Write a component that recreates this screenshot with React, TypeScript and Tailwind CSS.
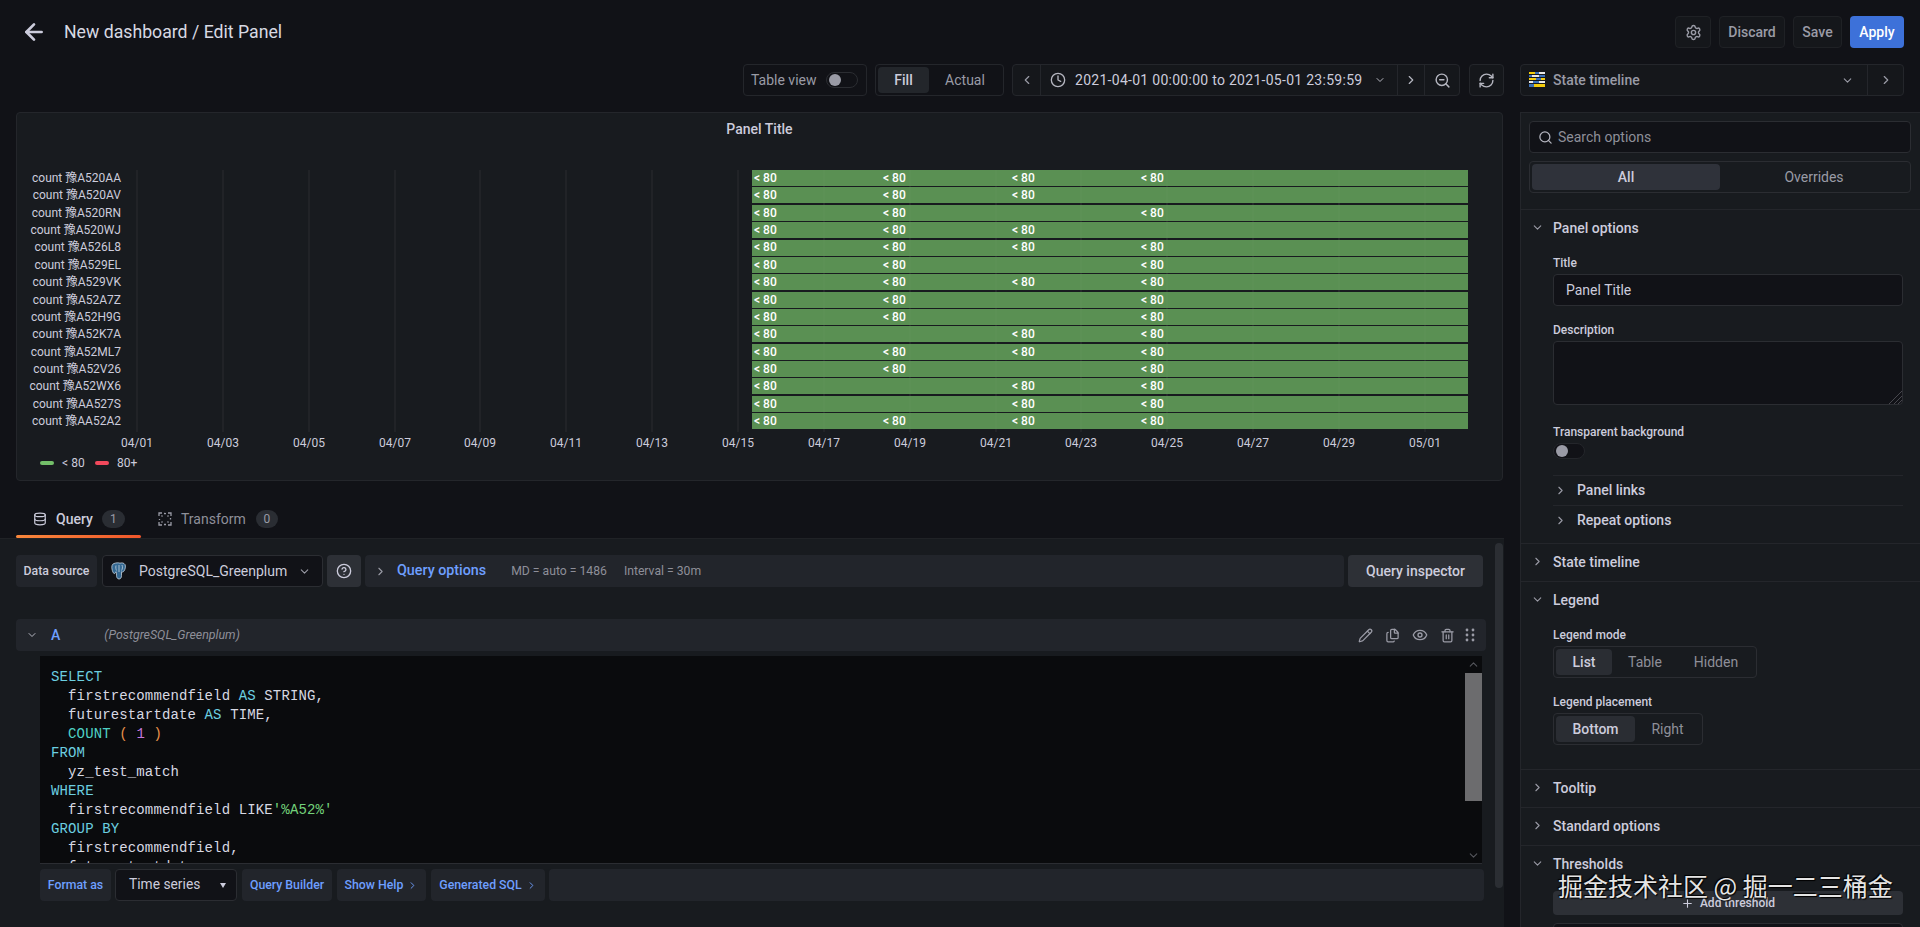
import React from "react";
import { ArrowLeft, Settings, ChevronDown, ChevronLeft, ChevronRight, ChevronUp, Clock, ZoomOut, RefreshCw, Search, Database, Pencil, Files, Eye, Trash2, CircleHelp, Plus } from "lucide-react";

const rows: [string, number[]][] = [
  ["count 豫A520AA", [0, 1, 2, 3]],
  ["count 豫A520AV", [0, 1, 2]],
  ["count 豫A520RN", [0, 1, 3]],
  ["count 豫A520WJ", [0, 1, 2]],
  ["count 豫A526L8", [0, 1, 2, 3]],
  ["count 豫A529EL", [0, 1, 3]],
  ["count 豫A529VK", [0, 1, 2, 3]],
  ["count 豫A52A7Z", [0, 1, 3]],
  ["count 豫A52H9G", [0, 1, 3]],
  ["count 豫A52K7A", [0, 2, 3]],
  ["count 豫A52ML7", [0, 1, 2, 3]],
  ["count 豫A52V26", [0, 1, 3]],
  ["count 豫A52WX6", [0, 2, 3]],
  ["count 豫AA527S", [0, 2, 3]],
  ["count 豫AA52A2", [0, 1, 2, 3]],
];
const rowTops = [170, 187, 205, 222, 240, 257, 274, 292, 309, 326, 344, 361, 378, 396, 413];
const colX = [754, 883, 1012, 1141];
const ticks: [string, number][] = [
  ["04/01", 137], ["04/03", 223], ["04/05", 309], ["04/07", 395], ["04/09", 480], ["04/11", 566], ["04/13", 652], ["04/15", 738],
  ["04/17", 824], ["04/19", 910], ["04/21", 996], ["04/23", 1081], ["04/25", 1167], ["04/27", 1253], ["04/29", 1339], ["05/01", 1425],
];

function Chart() {
  return (
    <svg width={1486} height={307} viewBox="17 145 1486 307" className="block" style={{ fontFamily: "Roboto, 'Noto Sans CJK SC', sans-serif" }}>
      {ticks.map(([t, x]) => (
        <line key={t} x1={x} x2={x} y1={170} y2={432} stroke="#2b2d31" strokeWidth={1} />
      ))}
      {rows.map(([name, cols], i) => {
        const ty = rowTops[i] + (i === 4 ? 11 : 12);
        return (
          <g key={name}>
            <text x={121} y={ty} textAnchor="end" fontSize={12} fill="#ccccdc">{name}</text>
            <rect x={752} y={rowTops[i]} width={716} height={16} fill="#5a9053" />
            {cols.map((c) => (
              <text key={c} x={colX[c]} y={ty} fontSize={12} fontWeight={500} fill="#ffffff">&lt; 80</text>
            ))}
          </g>
        );
      })}
      {ticks.slice(8).map(([t, x]) => (
        <line key={t} x1={x} x2={x} y1={170} y2={429} stroke="#ffffff" strokeOpacity={0.03} strokeWidth={1} />
      ))}
      {ticks.map(([t, x]) => (
        <text key={t} x={x} y={447} textAnchor="middle" fontSize={12} fill="#ccccdc">{t}</text>
      ))}
    </svg>
  );
}

function TimelineIcon() {
  return (
    <svg width="16" height="16" viewBox="0 0 16 16" className="shrink-0">
      <rect x="0" y="0" width="6" height="2" fill="#f2cc0c" /><rect x="6" y="0" width="4" height="2" fill="#3b6fb6" /><rect x="10" y="0" width="6" height="2" fill="#e8e8e8" />
      <rect x="0" y="3" width="3" height="2" fill="#3b6fb6" /><rect x="3" y="3" width="7" height="2" fill="#e8e8e8" /><rect x="10" y="3" width="6" height="2" fill="#3b6fb6" />
      <rect x="0" y="6" width="7" height="2" fill="#f2cc0c" /><rect x="7" y="6" width="5" height="2" fill="#3b6fb6" /><rect x="12" y="6" width="4" height="2" fill="#f2cc0c" />
      <rect x="0" y="9" width="4" height="2" fill="#e8e8e8" /><rect x="4" y="9" width="6" height="2" fill="#3b6fb6" /><rect x="10" y="9" width="6" height="2" fill="#e8e8e8" />
      <rect x="0" y="12" width="5" height="3" fill="#3b6fb6" /><rect x="5" y="12" width="5" height="3" fill="#f2cc0c" /><rect x="10" y="12" width="6" height="3" fill="#f2cc0c" />
    </svg>
  );
}

function PgIcon() {
  return (
    <svg width="16" height="18" viewBox="0 0 16 18" className="shrink-0">
      <path d="M3 1.5C1 2 .5 4.500 1 7c.4 2 1 4 2 4.500 1 .4 1.500-.8 2-1.800.5 1 .5 2 .5 3.500 0 2 .8 3.800 2.500 3.800 1.800 0 2.500-1.500 2.500-3.500V9.800c1 .5 1.800.2 2.500-.8 1.200-1.800 2-4.500 1-6.500C13 .8 10.500.6 9 1.200 7.500.6 4.800.8 3 1.500z" fill="#336791" stroke="#c6d3de" strokeWidth="0.8" />
      <path d="M8 3v7M5 3.500c-.5 2 0 4 .5 5M11 3c.8 2 .5 4-.5 5.500" stroke="#d8e2ea" strokeWidth="0.7" fill="none" />
    </svg>
  );
}

function TransformIcon() {
  return (
    <svg width="14" height="14" viewBox="0 0 14 14" fill="none" stroke="#9a9ba6" strokeWidth="1.300" className="shrink-0">
      <path d="M1 4V1h3M10 1h3v3M13 10v3h-3M4 13H1v-3" />
      <path d="M6 1.500l2 .1M1.500 7v1M12.500 6v1.500M6 12.500h2M3.500 3.500l1 1M10.500 3.500l-1 1M3.500 10.500l1-1M10.500 10.500l-1-1" />
    </svg>
  );
}

function Section({ title, open = false }: { title: string; open?: boolean }) {
  return (
    <div className="flex h-[37px] items-center pb-[2px] text-sm font-medium text-[#ccccdc]">
      <span className="flex w-[32px] justify-center pl-[1px]">
        {open ? <ChevronDown size={13} className="text-[#9a9ba6]" /> : <ChevronRight size={13} className="text-[#9a9ba6]" />}
      </span>
      {title}
    </div>
  );
}

function SubSection({ title }: { title: string }) {
  return (
    <div className="flex h-[29px] items-center pb-[1px] text-sm font-medium text-[#ccccdc]">
      <ChevronRight size={13} className="ml-[1px] mr-[10px] text-[#9a9ba6]" />
      <span>{title}</span>
    </div>
  );
}

function FieldLabel({ children, className = "" }: { children: React.ReactNode; className?: string }) {
  return <div className={`h-4 text-xs font-medium leading-4 text-[#ccccdc] ${className}`}>{children}</div>;
}

function Radio({ items, widths }: { items: string[]; widths: string[] }) {
  return (
    <div className="flex h-8 w-fit items-center rounded-sm border border-[#2b2d32] p-[2px]">
      {items.map((it, i) => (
        <div key={it} className={`flex h-[26px] items-center justify-center rounded-sm text-sm ${widths[i]} ${i === 0 ? "bg-[#2a2d33] font-medium text-[#ccccdc]" : "text-[#8e8f99]"}`}>{it}</div>
      ))}
    </div>
  );
}

function Toolbar() {
  return (
    <div className="flex h-8 items-stretch justify-end">
      <div className="flex w-[124px] items-center rounded-sm border border-[#24262b] pl-[7px] text-sm text-[#9a9ba6]">
        Table view
        <span className="ml-[9px] flex h-4 w-8 items-center rounded-full border border-[#2b2d32] bg-[#111217] px-[2px]">
          <span className="h-[12px] w-[12px] rounded-full bg-[#9a9ba6]" />
        </span>
      </div>
      <div className="ml-2 flex w-[129px] items-center rounded-sm border border-[#24262b] p-[2px] text-sm">
        <div className="flex h-[26px] w-[51px] items-center justify-center rounded-sm bg-[#23262b] font-medium text-[#ccccdc]">Fill</div>
        <div className="flex flex-1 items-center justify-center text-[#9a9ba6]">Actual</div>
      </div>
      <div className="ml-2 flex w-[448px] items-stretch rounded-sm border border-[#24262b] bg-[#15171b] text-sm text-[#ccccdc]">
        <div className="flex w-[28px] items-center justify-center border-r border-[#24262b]"><ChevronLeft size={14} className="text-[#9a9ba6]" /></div>
        <div className="flex w-[357px] items-center border-r border-[#24262b] pl-[9px]">
          <Clock size={16} className="mr-[9px] text-[#b5b6c0]" />
          <span className="whitespace-nowrap tracking-[0.28px]">2021-04-01 00:00:00 to 2021-05-01 23:59:59</span>
          <ChevronDown size={12} className="ml-[12px] text-[#b5b6c0]" />
        </div>
        <div className="flex w-[27px] items-center justify-center border-r border-[#24262b]"><ChevronRight size={14} className="text-[#b5b6c0]" /></div>
        <div className="flex flex-1 items-center justify-center"><ZoomOut size={17} className="text-[#b5b6c0]" /></div>
      </div>
      <div className="ml-[9px] flex w-[35px] items-center justify-center rounded-sm border border-[#24262b] bg-[#15171b]"><RefreshCw size={17} className="text-[#b5b6c0]" /></div>
    </div>
  );
}

function PanelBox() {
  return (
    <div className="ml-4 mt-4 flex h-[369px] w-[1487px] flex-col rounded-sm border border-[#24262b] bg-[#181b1f]">
      <div className="flex h-[32px] items-center justify-center text-sm font-medium text-[#ccccdc]">Panel Title</div>
      <Chart />
      <div className="flex h-[22px] items-center pl-[23px] text-xs text-[#ccccdc]">
        <span className="h-1 w-[14px] rounded-sm bg-[#73bf69]" />
        <span className="ml-2 tracking-[0.1px]">&lt; 80</span>
        <span className="ml-[10px] h-1 w-[14px] rounded-sm bg-[#f2495c]" />
        <span className="ml-[8px]">80+</span>
      </div>
    </div>
  );
}

function QueryTabs() {
  return (
    <div className="flex h-[57px] items-end pl-4">
      <div className="relative flex h-[38px] w-[125px] items-center pl-[17px] text-sm font-medium text-[#ccccdc]">
        <Database size={14} className="mr-[9px]" />
        Query
        <span className="ml-[9px] flex h-[18px] w-[23px] items-center justify-center rounded-full bg-[#2a2d33] text-xs font-normal text-[#9a9ba6]">1</span>
        <span className="absolute bottom-0 left-0 h-[3px] w-full rounded-sm bg-gradient-to-r from-[#f9873c] to-[#f0562b]" />
      </div>
      <div className="flex h-[38px] items-center pl-[17px] text-sm text-[#8e8f99]">
        <TransformIcon />
        <span className="ml-[9px]">Transform</span>
        <span className="ml-[10px] flex h-[18px] w-[22px] items-center justify-center rounded-full bg-[#2a2d33] text-xs text-[#9a9ba6]">0</span>
      </div>
    </div>
  );
}

function Code() {
  const kw = "text-[#6ccfe0]";
  const id = "text-[#d8d9e3]";
  const Line = ({ children }: { children: React.ReactNode }) => <div className="h-[19px] whitespace-pre leading-[19px]">{children}</div>;
  return (
    <div className={`h-full pl-[11px] pt-[12px] text-[14px] tracking-[0.13px] ${id}`} style={{ fontFamily: "'Liberation Mono', monospace" }}>
      <Line><span className={kw}>SELECT</span></Line>
      <Line>{"  firstrecommendfield "}<span className={kw}>AS</span>{" STRING,"}</Line>
      <Line>{"  futurestartdate "}<span className={kw}>AS</span>{" TIME,"}</Line>
      <Line>{"  "}<span className="text-[#4fd1c5]">COUNT</span>{" "}<span className="text-[#e8914a]">(</span>{" "}<span className="text-[#c678dd]">1</span>{" "}<span className="text-[#e8914a]">)</span></Line>
      <Line><span className={kw}>FROM</span></Line>
      <Line>{"  yz_test_match"}</Line>
      <Line><span className={kw}>WHERE</span></Line>
      <Line>{"  firstrecommendfield LIKE"}<span className="text-[#73d17a]">'%A52%'</span></Line>
      <Line><span className={kw}>GROUP BY</span></Line>
      <Line>{"  firstrecommendfield,"}</Line>
      <Line>{"  futurestartdate"}</Line>
    </div>
  );
}

function QueryPane() {
  const blue = "text-[#6e9fff]";
  const cell = "flex h-8 items-center rounded-sm bg-[#22252b] text-[12.3px] font-medium";
  return (
    <div className="relative h-[389px] w-[1504px] overflow-hidden border-t border-[#202226] bg-[#181b1f] pt-4">
      <div className="flex h-8 pl-4 pr-[21px]">
        <div className={`${cell} w-[81px] justify-center text-[#ccccdc]`}>Data source</div>
        <div className="ml-[5px] flex w-[221px] items-center rounded-sm border border-[#2b2d32] bg-[#111217] pl-[8px] text-sm text-[#ccccdc]">
          <PgIcon />
          <span className="ml-[12px] whitespace-nowrap">PostgreSQL_Greenplum</span>
          <ChevronDown size={13} className="ml-[11px] text-[#9a9ba6]" />
        </div>
        <div className="ml-1 flex w-[34px] items-center justify-center rounded-sm bg-[#2d3036]"><CircleHelp size={16} className="text-[#ccccdc]" /></div>
        <div className="ml-1 flex w-[979px] items-center rounded-sm bg-[#22252b] pl-[9px]">
          <ChevronRight size={13} className="text-[#9a9ba6]" />
          <span className={`ml-[10px] text-[14.3px] font-medium ${blue}`}>Query options</span>
          <span className="ml-[25px] text-[12.2px] text-[#8e8f99]">MD = auto = 1486</span>
          <span className="ml-[17px] text-[12.2px] text-[#8e8f99]">Interval = 30m</span>
        </div>
        <div className="ml-1 flex w-[135px] items-center justify-center rounded-sm bg-[#2d3036] text-sm font-medium text-[#ccccdc]">Query inspector</div>
      </div>
      <div className="ml-4 mt-8 flex h-8 w-[1470px] items-center rounded-sm bg-[#22252b] text-[#b5b6c0]">
        <ChevronDown size={12} className="ml-[10px]" />
        <span className="ml-[13px] text-sm font-medium text-[#6e9fff]">A</span>
        <span className="ml-[44px] text-[12.4px] italic text-[#8e8f99]">(PostgreSQL_Greenplum)</span>
        <div className="ml-auto flex items-center gap-[12px] pr-[11px] text-[#9a9ba6]">
          <Pencil size={15} />
          <Files size={15} />
          <Eye size={16} />
          <Trash2 size={15} />
          <svg width="10" height="14" viewBox="0 0 10 14" fill="currentColor" className="-ml-[2px]"><circle cx="2" cy="2" r="1.400" /><circle cx="8" cy="2" r="1.400" /><circle cx="2" cy="7" r="1.400" /><circle cx="8" cy="7" r="1.400" /><circle cx="2" cy="12" r="1.400" /><circle cx="8" cy="12" r="1.400" /></svg>
        </div>
      </div>
      <div className="relative ml-10 mt-[5px] h-[208px] w-[1442px] overflow-hidden border-b border-[#2b2d32] bg-[#0a0b0d]">
        <Code />
        <div className="absolute right-0 top-0 flex h-full w-[17px] flex-col items-center">
          <ChevronUp size={13} className="mt-[2px] text-[#55565c]" />
          <div className="mt-[2px] h-[128px] w-[17px] bg-[#6c6c6e]" />
          <ChevronDown size={13} className="absolute bottom-[1px] text-[#55565c]" />
        </div>
      </div>
      <div className="ml-10 mt-[5px] flex h-8 w-[1444px] gap-1">
        <div className={`${cell} w-[71px] justify-center ${blue}`}>Format as</div>
        <div className="flex w-[122px] items-center rounded-sm border border-[#2b2d32] bg-[#111217] pl-[13px] text-sm text-[#ccccdc]">
          <span className="text-[13.8px]">Time series</span>
          <span className="ml-[20px] h-0 w-0 border-x-[3.5px] border-t-[5px] border-x-transparent border-t-[#ccccdc]" />
        </div>
        <div className={`${cell} ml-[1px] w-[90px] justify-center ${blue}`}>Query Builder</div>
        <div className={`${cell} ml-[1px] w-[89px] justify-center gap-[4px] ${blue}`}>Show Help <ChevronRight size={11} /></div>
        <div className={`${cell} ml-[1px] w-[114px] justify-center gap-[4px] ${blue}`}>Generated SQL <ChevronRight size={11} /></div>
        <div className={`${cell} flex-1`} />
      </div>
      <div className="absolute left-[1495px] top-[4px] h-[345px] w-[8px] rounded-sm bg-[#2b2e33]" />
    </div>
  );
}

function OptionsPane() {
  return (
    <div className="relative mt-4 h-[815px] w-[400px] overflow-hidden border-l border-t border-[#24262b] bg-[#181b1f]">
      <div className="mx-2 mt-2 flex h-8 w-[382px] items-center rounded-sm border border-[#2b2d32] bg-[#111217] pl-2 text-sm text-[#8e8f99]">
        <Search size={15} className="mr-[5px] text-[#b5b6c0]" />
        Search options
      </div>
      <div className="mx-2 mt-2 flex h-8 w-[382px] items-center rounded-sm border border-[#2b2d32] p-[2px] text-sm">
        <div className="flex h-[26px] w-[188px] items-center justify-center rounded-sm bg-[#2f323a] font-medium text-[#ccccdc]">All</div>
        <div className="flex flex-1 items-center justify-center text-[#9a9ba6]">Overrides</div>
      </div>
      <div className="mt-4 border-t border-[#24262b]">
        <Section title="Panel options" open />
        <div className="mx-8 mt-[8px] w-[350px]">
          <FieldLabel>Title</FieldLabel>
          <div className="mt-[3px] flex h-8 items-center rounded-sm border border-[#2b2d32] bg-[#111217] pl-[12px] text-sm text-[#ccccdc]">Panel Title</div>
          <FieldLabel className="mt-[16px]">Description</FieldLabel>
          <div className="relative mt-[3px] h-[64px] rounded-sm border border-[#2b2d32] bg-[#111217]">
            <svg width="14" height="14" viewBox="0 0 14 14" stroke="#55565c" strokeWidth="0.8" className="absolute bottom-0 right-0"><path d="M1 14L14 1M6 14l8-8M10 14l4-4" /></svg>
          </div>
          <FieldLabel className="mt-[19px]">Transparent background</FieldLabel>
          <div className="mt-[3px] flex h-4 w-8 items-center rounded-full border border-[#24262b] bg-[#111217] px-[2px]">
            <span className="h-[12px] w-[12px] rounded-full bg-[#9a9ba6]" />
          </div>
          <div className="mt-4 border-t border-[#24262b]"><SubSection title="Panel links" /></div>
          <div className="border-t border-[#24262b]"><SubSection title="Repeat options" /></div>
        </div>
      </div>
      <div className="mt-[8px] border-t border-[#24262b]"><Section title="State timeline" /></div>
      <div className="border-t border-[#24262b]">
        <Section title="Legend" open />
        <div className="ml-8 mt-[8px]">
          <FieldLabel>Legend mode</FieldLabel>
          <div className="mt-[3px]"><Radio items={["List", "Table", "Hidden"]} widths={["w-[56px]", "w-[66px]", "w-[76px]"]} /></div>
          <FieldLabel className="mt-[16px]">Legend placement</FieldLabel>
          <div className="mt-[3px]"><Radio items={["Bottom", "Right"]} widths={["w-[79px]", "w-[65px]"]} /></div>
        </div>
      </div>
      <div className="mt-[24px] border-t border-[#24262b]"><Section title="Tooltip" /></div>
      <div className="border-t border-[#24262b]"><Section title="Standard options" /></div>
      <div className="border-t border-[#24262b]">
        <Section title="Thresholds" open />
        <div className="mx-8 mt-[8px] flex h-6 w-[350px] items-center justify-center gap-[6px] rounded-sm bg-[#2d3036] text-xs font-medium text-[#ccccdc]">
          <Plus size={13} /> Add threshold
        </div>
        <div className="mx-8 mt-2 h-8 w-[350px] rounded-sm border border-[#2b2d32] bg-[#111217]" />
      </div>
      <div className="absolute left-[37px] top-[754px] whitespace-nowrap text-[25px] leading-[36px] text-[#e4e4e4] [text-shadow:1px_1px_1px_#000,-1px_-1px_1px_#000]" style={{ fontFamily: "'Noto Sans CJK SC', sans-serif" }}>掘金技术社区 @ 掘一二三桶金</div>
    </div>
  );
}

export default function App() {
  return (
    <div className="h-[927px] w-[1920px] overflow-hidden bg-[#111217]" style={{ fontFamily: "Roboto, 'Noto Sans CJK SC', sans-serif" }}>
      <header className="flex h-16 items-center pl-[21px] pr-4">
        <ArrowLeft size={26} strokeWidth={2.500} className="text-[#ccccdc]" />
        <h1 className="ml-[17px] text-[17.7px] text-[#d8d9e3]">New dashboard / Edit Panel</h1>
        <div className="ml-auto flex h-8 items-stretch text-sm font-medium text-[#9a9ba6]">
          <div className="flex w-[36px] items-center justify-center rounded-sm border border-[#1f2125] bg-[#15171b]"><Settings size={17} /></div>
          <div className="ml-2 flex w-[66px] items-center justify-center rounded-sm border border-[#1f2125] bg-[#15171b]">Discard</div>
          <div className="ml-2 flex w-[49px] items-center justify-center rounded-sm border border-[#1f2125] bg-[#15171b]">Save</div>
          <div className="ml-2 flex w-[54px] items-center justify-center rounded-sm bg-[#3d71d9] text-white">Apply</div>
        </div>
      </header>
      <div className="flex items-start">
        <div className="w-[1504px]">
          <Toolbar />
          <PanelBox />
          <QueryTabs />
          <QueryPane />
        </div>
        <div className="ml-4 w-[400px]">
          <div className="flex h-8 w-[384px] items-stretch rounded-sm border border-[#24262b] bg-[#15171b] text-sm font-medium text-[#9a9ba6]">
            <div className="flex flex-1 items-center border-r border-[#24262b] pl-2">
              <TimelineIcon />
              <span className="ml-2">State timeline</span>
              <ChevronDown size={13} className="ml-auto mr-[13px]" />
            </div>
            <div className="flex w-[35px] items-center justify-center"><ChevronRight size={14} /></div>
          </div>
          <OptionsPane />
        </div>
      </div>
    </div>
  );
}
